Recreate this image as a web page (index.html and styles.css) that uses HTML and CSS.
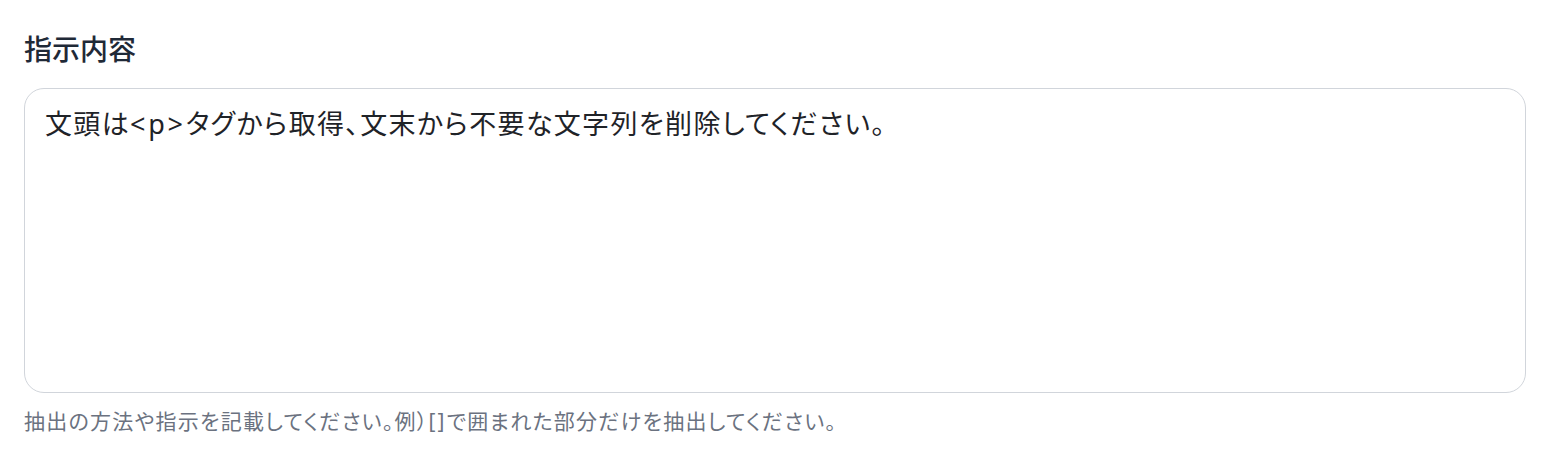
FILE: index.html
```html
<!DOCTYPE html>
<html lang="ja">
<head>
<meta charset="utf-8">
<link rel="stylesheet" href="styles.css">
</head>
<body>
<div class="field">
  <label class="label">指示内容</label>
  <div class="box">文頭は<span class="latin">&lt;p&gt;</span>タグから取得、文末から不要な文字列を削除してください。</div>
  <p class="help">抽出の方法や指示を記載してください。例）<span class="latin">[]</span>で囲まれた部分だけを抽出してください。</p>
</div>
</body>
</html>
```
FILE: styles.css
```css
html, body {
  margin: 0;
  padding: 0;
  background: #ffffff;
}
body {
  font-family: "Noto Sans CJK JP", "Noto Sans", sans-serif;
  font-feature-settings: "palt";
}
.field {
  padding: 30px 28px 0 24px;
  display: flex;
  flex-direction: column;
}
.label {
  font-size: 28px;
  line-height: 36px;
  color: #1f2937;
  font-weight: 500;
  letter-spacing: 0;
}
.box {
  margin-top: 22px;
  height: 271px;
  border: 1.5px solid #d1d5db;
  border-radius: 20px;
  padding: 16px 20px;
  font-size: 27px;
  line-height: 36px;
  letter-spacing: 0.05em;
  color: #1f2328;
}
.latin {
  font-family: "Noto Sans", sans-serif;
  letter-spacing: 0.1em;
}
.help {
  margin: 12px 0 0;
  font-size: 21px;
  line-height: 30px;
  letter-spacing: 0.06em;
  color: #6b7280;
}
```
